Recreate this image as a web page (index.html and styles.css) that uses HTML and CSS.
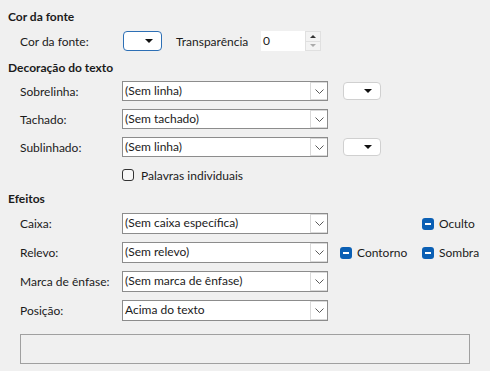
FILE: index.html
```html
<!DOCTYPE html>
<html lang="pt">
<head>
  <meta charset="UTF-8" />
  <title>Efeitos da fonte</title>
  <link rel="stylesheet" href="styles.css">
</head>
<body>
  <div class="panel">
    <h2 class="section-title">Cor da fonte</h2>
    <div class="row row-top">
      <span class="label">Cor da fonte:</span>
      <button class="color-btn focused"><span class="tri"></span></button>
      <span class="inline-label">Transparência</span>
      <div class="spin">
        <span class="spin-value">0</span>
        <span class="spin-btns">
          <span class="spin-up"></span>
          <span class="spin-down"></span>
        </span>
      </div>
    </div>

    <h2 class="section-title">Decoração do texto</h2>
    <div class="rows">
      <div class="row">
        <span class="label">Sobrelinha:</span>
        <div class="combo"><span class="combo-text">(Sem linha)</span><span class="combo-btn"><svg width="9" height="5" viewBox="0 0 9 5"><path d="M0.5 0.5 L4.5 4.5 L8.5 0.5" fill="none" stroke="#5a5a5a" stroke-width="1"/></svg></span></div>
        <button class="color-btn small"><span class="tri"></span></button>
      </div>
      <div class="row">
        <span class="label">Tachado:</span>
        <div class="combo"><span class="combo-text">(Sem tachado)</span><span class="combo-btn"><svg width="9" height="5" viewBox="0 0 9 5"><path d="M0.5 0.5 L4.5 4.5 L8.5 0.5" fill="none" stroke="#5a5a5a" stroke-width="1"/></svg></span></div>
      </div>
      <div class="row">
        <span class="label">Sublinhado:</span>
        <div class="combo"><span class="combo-text">(Sem linha)</span><span class="combo-btn"><svg width="9" height="5" viewBox="0 0 9 5"><path d="M0.5 0.5 L4.5 4.5 L8.5 0.5" fill="none" stroke="#5a5a5a" stroke-width="1"/></svg></span></div>
        <button class="color-btn small"><span class="tri"></span></button>
      </div>
      <div class="row check-row">
        <span class="check empty"></span>
        <span>Palavras individuais</span>
      </div>
    </div>

    <h2 class="section-title">Efeitos</h2>
    <div class="rows effects">
      <div class="row">
        <span class="label">Caixa:</span>
        <div class="combo"><span class="combo-text">(Sem caixa específica)</span><span class="combo-btn"><svg width="9" height="5" viewBox="0 0 9 5"><path d="M0.5 0.5 L4.5 4.5 L8.5 0.5" fill="none" stroke="#5a5a5a" stroke-width="1"/></svg></span></div>
        <span class="opt-slot"></span>
        <span class="opt"><span class="check mixed"></span>Oculto</span>
      </div>
      <div class="row">
        <span class="label">Relevo:</span>
        <div class="combo"><span class="combo-text">(Sem relevo)</span><span class="combo-btn"><svg width="9" height="5" viewBox="0 0 9 5"><path d="M0.5 0.5 L4.5 4.5 L8.5 0.5" fill="none" stroke="#5a5a5a" stroke-width="1"/></svg></span></div>
        <span class="opt-slot"><span class="check mixed"></span>Contorno</span>
        <span class="opt"><span class="check mixed"></span>Sombra</span>
      </div>
      <div class="row">
        <span class="label">Marca de ênfase:</span>
        <div class="combo"><span class="combo-text">(Sem marca de ênfase)</span><span class="combo-btn"><svg width="9" height="5" viewBox="0 0 9 5"><path d="M0.5 0.5 L4.5 4.5 L8.5 0.5" fill="none" stroke="#5a5a5a" stroke-width="1"/></svg></span></div>
      </div>
      <div class="row">
        <span class="label">Posição:</span>
        <div class="combo"><span class="combo-text">Acima do texto</span><span class="combo-btn"><svg width="9" height="5" viewBox="0 0 9 5"><path d="M0.5 0.5 L4.5 4.5 L8.5 0.5" fill="none" stroke="#5a5a5a" stroke-width="1"/></svg></span></div>
      </div>
    </div>

    <div class="preview"></div>
  </div>
</body>
</html>
```

FILE: styles.css
```css
* {
  margin: 0;
  padding: 0;
  box-sizing: border-box;
}

body {
  background: #f0f0f0;
  font-family: 'Lato', 'Noto Sans', sans-serif;
  font-size: 12px;
  color: #1b1b1b;
  width: 490px;
  height: 371px;
  overflow: hidden;
}

.panel {
  padding: 8px 20px 0 8px;
}

.section-title {
  font-size: 12px;
  font-weight: 700;
  line-height: 18px;
  height: 18px;
}

.row {
  display: flex;
  align-items: center;
  height: 20px;
  padding-left: 12px;
}

.row-top {
  margin-top: 5px;
  margin-bottom: 8px;
}

.rows {
  display: flex;
  flex-direction: column;
  gap: 8px;
  margin-top: 4px;
  margin-bottom: 7px;
}

.effects {
  margin-top: 5px;
  gap: 8px;
}

.effects .row {
  height: 21px;
}

.label {
  width: 101px;
  flex: none;
  white-space: nowrap;
}

.inline-label {
  margin-left: 14px;
  width: 85px;
  flex: none;
}

.color-btn {
  width: 39px;
  height: 20px;
  flex: none;
  background: #fff;
  border: 1px solid #d0d0d0;
  border-radius: 4px;
  display: flex;
  align-items: center;
  justify-content: flex-end;
  padding-right: 8px;
}

.color-btn.focused {
  margin-left: 2px;
  border-color: #2d6fb5;
}

.color-btn.small {
  width: 38px;
  height: 18px;
  margin-left: 15px;
}

.tri {
  width: 0;
  height: 0;
  border-left: 4px solid transparent;
  border-right: 4px solid transparent;
  border-top: 4px solid #111;
}

.spin {
  display: flex;
  width: 60px;
  height: 20px;
  flex: none;
  background: #fff;
}

.spin-value {
  flex: 1;
  padding-left: 2px;
  line-height: 20px;
}

.spin-btns {
  width: 16px;
  display: flex;
  flex-direction: column;
  background: #f3f3f3;
  border: 1px solid #e0e0e0;
}

.spin-up,
.spin-down {
  flex: 1;
  display: flex;
  align-items: center;
  justify-content: center;
}

.spin-up::after {
  content: '';
  border-left: 3px solid transparent;
  border-right: 3px solid transparent;
  border-bottom: 3px solid #333;
}

.spin-down {
  border-top: 1px solid #e0e0e0;
}

.spin-down::after {
  content: '';
  border-left: 3px solid transparent;
  border-right: 3px solid transparent;
  border-top: 3px solid #aaa;
}

.combo {
  width: 206px;
  height: 100%;
  flex: none;
  display: flex;
  background: #fff;
  border: 1px solid #8c8c8c;
  margin-left: 1px;
}

.combo-text {
  flex: 1;
  padding-left: 2px;
  line-height: 18px;
  white-space: nowrap;
}

.combo-btn {
  width: 17px;
  display: flex;
  align-items: center;
  justify-content: center;
  border: 1px solid #d9d9d9;
  border-right: none;
}

.check-row {
  padding-left: 114px;
  height: 16px;
  margin-top: 2px;
  gap: 7px;
}

.check {
  width: 12px;
  height: 12px;
  border-radius: 3px;
  flex: none;
}

.check.empty {
  border: 1px solid #333;
  background: #f7f7f7;
}

.check.mixed {
  background: #0a5fb4;
  display: flex;
  align-items: center;
  justify-content: center;
  margin-right: 5px;
}

.check.mixed::after {
  content: '';
  width: 6px;
  height: 2px;
  background: #fff;
}

.opt-slot {
  width: 82px;
  flex: none;
  margin-left: 12px;
  display: flex;
  align-items: center;
}

.opt {
  display: flex;
  align-items: center;
}

.preview {
  margin: 13px 0 0 12px;
  height: 30px;
  width: 450px;
  border: 1px solid #a0a0a0;
}
```
